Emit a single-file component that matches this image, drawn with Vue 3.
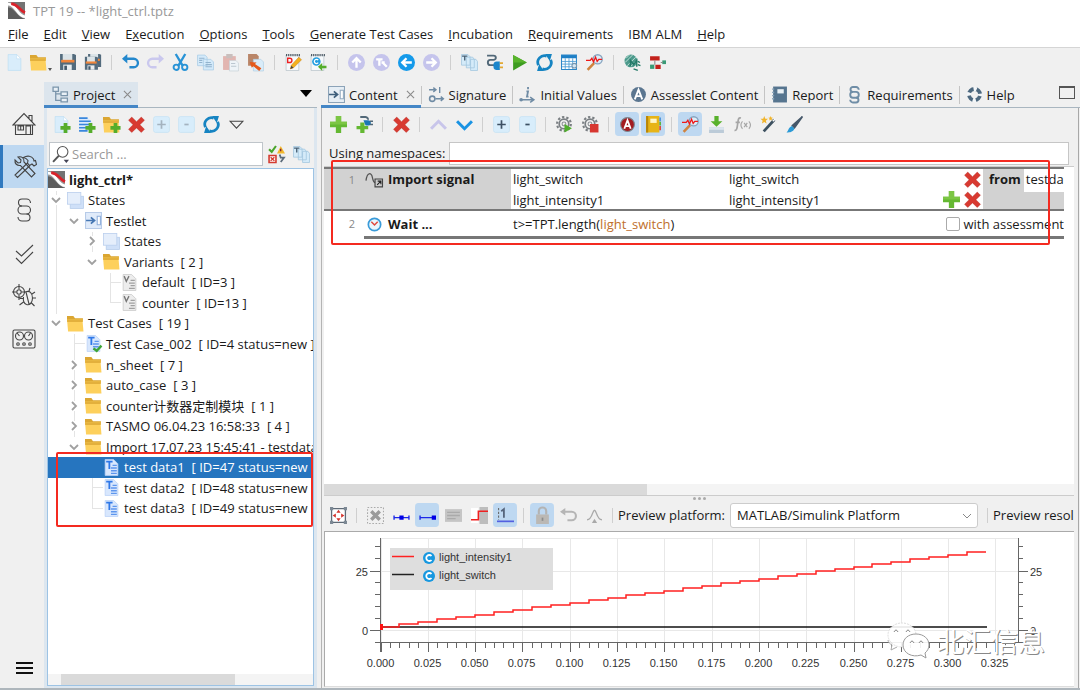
<script setup>
import { ref } from 'vue'

const page = '<path d="M2 .5h8l4 4v11H2z" fill="#d9edfb" stroke="#b9dcf3" stroke-width=".6"/><path d="M10 .5l4 4h-4z" fill="#fff" stroke="#b9dcf3" stroke-width=".5"/>'
const folder = '<path d="M0 1h6l1.500 2H15v3H0z" fill="#dba632"/><path d="M0 4h14.500l1 11.500H1z" fill="#fdd05c"/><path d="M0 4h14.500l.3 2.500H.2z" fill="#e3b03c"/>'
const plus = '<path d="M10 6.500h3.500v3h3v3.500h-3v3H10v-3H7V9.500h3z" fill="#55ad2b"/>'
const disk = '<path d="M1 0h13l2 1v14H1z" fill="#536b7d"/><path d="M3.500 0h9v7h-9z" fill="#dce4e8"/><path d="M2 5.500h12.500v2.500H2z" fill="#f0853a"/><path d="M4 10h8v5H4z" fill="#e9eef1"/><path d="M5 11h2.500v4H5z" fill="#43586a"/>'
const copy = '<path d="M.5 1h7l2 2v8h-9zM6 5h7l2.500 2.500V15H6z" fill="#d4eafa" stroke="#a9cce6" stroke-width=".7"/><path d="M2 4h5M2 6h3M2 8h3M8 8h5M8 10h6M8 12h6" stroke="#93b4cf" fill="none"/>'
const cross = '<path d="M3.500 1L8 5.300 12.500 1 15.500 4 11.200 8.200l4.300 4.300-3 3L8 11.200l-4.500 4.300-3-3 4.300-4.300L.5 4z" fill="#d83a31" stroke="#b82d28" stroke-width=".4"/>'
const refresh = '<path d="M2.200 10.500A6.300 6.300 0 0 1 10 2M13.800 5.500A6.300 6.300 0 0 1 6 14" fill="none" stroke="#1684c2" stroke-width="2.600"/><path d="M8.500 0H15l-2 6.500zM7.500 16H1l2-6.500z" fill="#1684c2"/>'
const gear = '<circle cx="7.500" cy="7.500" r="4.500" fill="none" stroke="#7a7f83" stroke-width="1.600"/><circle cx="7.500" cy="7.500" r="6.500" fill="none" stroke="#7a7f83" stroke-width="2" stroke-dasharray="2.200 1.880"/><circle cx="7.500" cy="7.500" r="1.800" fill="none" stroke="#8b9094"/>'
const magnify = '<circle cx="11" cy="5" r="4.300" fill="#dcecf8" stroke="#87a4bf" stroke-width="1.300"/><path d="M7.600 8.500L1.500 15" stroke="#cf8440" stroke-width="2.400"/><path d="M0 6h4l1.500-2 1.500 3.500L9 3l1.500 4L12 5h3" stroke="#f01818" fill="none" stroke-width="1.200"/>'
const sheetT = '<path d="M2 .5h8l4 4v11H2z" fill="#d8e7fd" stroke="#b8d0f5" stroke-width=".7"/><path d="M3 2.500h6M6 2.500v7" stroke="#2f78e8" stroke-width="1.700"/><path d="M9 6h4M7.500 8.500H13M7.500 11H13M7.500 13.500H13" stroke="#5d96ee" stroke-width="1.300"/>'
const logo = '<path d="M0 0h16v16H0z" fill="#9a9a9a"/><path d="M0 5c6 0 8 9 16 11H0z" fill="#5c5c5c"/><path d="M3 0h13v10C11 8 9 1 3 0z" fill="#747474"/><path d="M0 2c8 0 8 11 16 12" stroke="#fff" stroke-width="2.600" fill="none"/><path d="M3 1.500c7 .5 7 6 13 8.500" stroke="#d9222a" stroke-width="2.600" fill="none"/>'
const pages = '<path d="M.5.5h6l2 2v8h-8zM5 3h6l1.500 2v8H5zM9 5h5l1.500 2v8.500H9z" fill="#d5ebf9" stroke="#9fc4dd" stroke-width=".7"/><path d="M1 2h5M3.500 2v4" stroke="#4b6377" stroke-width="1.300"/>'
const box = '<rect x=".5" y=".5" width="15" height="15" rx="2" fill="#d8edfb" stroke="#c2dff2" stroke-width=".6"/>'
const round = (c, p) => `<circle cx="8" cy="8" r="8" fill="${c}"/><path d="${p}" stroke="#fff" stroke-width="2.200" fill="none"/>`

const icons = {
  logo, page, folder, disk, copy, cross, refresh, magnify, sheetT, pages,
  folderOpen: folder,
  disks: `<g transform="translate(3 0) scale(.82)">${disk}</g><g transform="translate(0 2.500) scale(.82)">${disk}</g>`,
  undo: '<path d="M3 4.500h8a4 4 0 0 1 0 8H7" stroke="#2488cd" stroke-width="2.200" fill="none"/><path d="M5 0v9L0 4.500z" fill="#2488cd"/>',
  redo: '<path d="M13 4.500H5a4 4 0 0 0 0 8h4" stroke="#cac8ee" stroke-width="2.200" fill="none"/><path d="M11 0v9l5-4.500z" fill="#cac8ee"/>',
  cut: '<path d="M3.500 0l6.500 11M12.500 0L6 11" stroke="#2993d6" stroke-width="2.200"/><circle cx="4" cy="12.500" r="2.500" fill="none" stroke="#2993d6" stroke-width="1.800"/><circle cx="12" cy="12.500" r="2.500" fill="none" stroke="#2993d6" stroke-width="1.800"/>',
  paste: '<path d="M1 2h12v13H1z" fill="#e2b5b0"/><path d="M4 0h6v4H4z" fill="#c9bebc"/><path d="M7 6h6l2.500 2.500V16H7z" fill="#eef3f7" stroke="#c5ced5" stroke-width=".6"/><path d="M8.500 9h4M8.500 11.500h5" stroke="#bcc7d0"/>',
  pasteRef: '<path d="M1 0h8l2 2v9H1z" fill="#b98568"/><path d="M6 5h7l2.500 2.500V16H6z" fill="#d9ecf9" stroke="#afcde2" stroke-width=".6"/><path d="M2.500 7.500L9 8 7.500 9.500l6 4-2 2.500-5.500-4.500L4.500 13z" fill="#e55a1c"/>',
  noteD: '<path d="M1 1h12v14.500H1z" fill="#f6f9fb" stroke="#b7c2ca" stroke-width=".7"/><path d="M1 1h13" stroke="#45525d" stroke-width="2" stroke-dasharray="1 1"/><path d="M2.500 4h2a2 2 0 0 1 0 4h-2z" fill="none" stroke="#e22" stroke-width="1.300"/><path d="M5 14l1-3.500L13 3l2.500 2.500L8 13z" fill="#f4b11d" stroke="#c57d13" stroke-width=".5"/><path d="M5 14l1-3 2 2z" fill="#444"/>',
  noteC: '<path d="M1 1h12v14.500H1z" fill="#f6f9fb" stroke="#b7c2ca" stroke-width=".7"/><path d="M1 1h13" stroke="#45525d" stroke-width="2" stroke-dasharray="1 1"/><circle cx="6" cy="7" r="4" fill="#239ee0"/><path d="M7.700 5.800a2 2 0 1 0 0 2.400" fill="none" stroke="#fff" stroke-width="1.200"/><path d="M7.500 12l4-3.500v2.500h4v2.500h-4V16z" fill="#55ad2b"/>',
  up: round('#c5c4ec', 'M8 13V4M4 8l4-4 4 4'),
  tl: round('#c5c4ec', 'M3 5h6M6 5v6M8 8h3M13 12L9 8'),
  back: round('#159aea', 'M13 8H4M8 4L4 8l4 4'),
  forward: round('#c5c4ec', 'M3 8h9M8 4l4 4-4 4'),
  plug: '<path d="M1 1.500h6c3 0 3 4 0 4H4c-3 0-3 5 0 5h4" fill="none" stroke="#526878" stroke-width="1.800"/><path d="M7 10c0-2 1.500-3 3-3h3v8h-3c-1.500 0-3-1-3-3z" fill="#1b86cc"/><path d="M13 8.500h3M13 12.500h3" stroke="#e2a832" stroke-width="1.600"/>',
  play: '<path d="M2 1l13 7-13 7.500z" fill="#3d9b20"/><path d="M2 1l13 7H2z" fill="#58b42c"/>',
  table: '<path d="M.5 1h14v13.500H.5z" fill="#fff" stroke="#2b86c8"/><path d="M.5 1h14v3H.5z" fill="#1d7fc6"/><path d="M4 4v10M7.500 4v10M11 4v10M1 7h13M1 9.500h13M1 12h13" stroke="#4a9bd3" stroke-width=".8"/><circle cx="12.500" cy="11" r="2.200" fill="#d5e8f5" stroke="#7896ae"/>',
  sphere: '<circle cx="6.500" cy="6.500" r="6" fill="#4c9a8c"/><path d="M2 4l3-3M1 8l7-7M3 11l8-8M5 13l7-7" stroke="#c4e2da" stroke-width=".9"/><path d="M6 12V6l3 4 3-4v6M13 7l2 1M13 10l2.500 1M9 14l4 1.500" stroke="#247a68" stroke-width="1.300" fill="none"/>',
  blocks: '<path d="M1 2h9v4H1zM6 10h5v4H6z" fill="#c3221c"/><path d="M1 10h4v4H1z" fill="#3a9a76"/><path d="M12.500 6H16v3.500h-3.500z" fill="#3a9a76"/><path d="M5.500 6v4M11 8h2" stroke="#888"/>',
  pagePlus: page + plus,
  linesPlus: '<path d="M1 1.500h8l4 4V14H1z" fill="#d9e9fd"/><path d="M1 2h8M1 5h11M1 8h11M1 11h8M1 14h8" stroke="#3a87dc" stroke-width="1.500"/>' + plus,
  folderPlus: folder + plus,
  expand: box + '<path d="M8 4v8M4 8h8" stroke="#3d5063" stroke-width="1.600"/>',
  collapse: box + '<path d="M6 8h4" stroke="#3d5063" stroke-width="1.600"/>',
  expandOff: box + '<path d="M8 4v8M4 8h8" stroke="#a4b3bf" stroke-width="1.600"/>',
  collapseOff: box + '<path d="M6 8h4" stroke="#a4b3bf" stroke-width="1.600"/>',
  triOutline: '<path d="M2 5h12l-6 6.500z" fill="none" stroke="#444"/>',
  search: '<circle cx="10" cy="5.500" r="5" fill="#fff" stroke="#555" stroke-width="1"/><path d="M6.500 9L1 15" stroke="#555" stroke-width="1.800"/><path d="M11 13h5l-2.500 3z" fill="#445"/>',
  filter: '<path d="M1 3l2.500 2.500L7.500 0" stroke="#4aa52b" stroke-width="2" fill="none"/><path d="M12 0l4 7H8.500z" fill="#f2b72b"/><path d="M12 2.500v2.500" stroke="#603" /><path d="M1 9h6.500v6.500H1z" fill="#fff" stroke="#d43b30" stroke-width="1.500"/><path d="M2.500 10.500l3.500 3.500M6 10.500L2.500 14" stroke="#d43b30" stroke-width="1.300"/><path d="M11 8l1 3h3l-3 4" stroke="#5c6b7a" stroke-width="1.700" fill="none"/>',
  states: '<rect x="3" y="4" width="12.500" height="11.500" fill="#cfe0f8" stroke="#b5cbea" stroke-width=".7"/><rect x=".5" y=".5" width="12.500" height="11" fill="#e5eefb" stroke="#bcd0ee" stroke-width=".8"/>',
  testlet: '<path d="M.5.500h15v15H.5z" fill="#e0ebfa" stroke="#b7cbe8"/><path d="M1 8h7M5.500 5L9 8l-3.500 3" stroke="#4677b3" stroke-width="1.600" fill="none"/><path d="M11.500 4h3v8h-3z" fill="#fff" stroke="#8eaedb"/>',
  content: '<path d="M.5.500h15v15H.5z" fill="#e6eef5" stroke="#8ca3b8"/><path d="M1 8h7M5.500 5L9 8l-3.500 3" stroke="#3e5f7c" stroke-width="1.600" fill="none"/><path d="M11.500 4h3v8h-3z" fill="#fff" stroke="#92aac0"/>',
  variant: '<path d="M2 .5h8l4 4v11H2z" fill="#ededed" stroke="#c6c6c6" stroke-width=".7"/><path d="M3 2l2 5 2.500-5" stroke="#777" stroke-width="1.300" fill="none"/><path d="M9 6h4M7.500 8.500H13M9 11h4M7.500 13.500H13" stroke="#a0a0a0" stroke-width="1.200"/>',
  sheetOk: sheetT + '<path d="M8 12.500l3 2.500 4.500-5" stroke="#3da535" stroke-width="2.200" fill="none"/>',
  project: '<path d="M1 1h5v4H1zM8.500 5.500h6v3.500h-6zM8.500 11.500h6V15h-6z" fill="#e9f0f6" stroke="#7b95ab" stroke-width="1.200"/><path d="M3.500 5v8.500h5M3.500 7.500h5" stroke="#7b95ab" fill="none" stroke-width="1.200"/>',
  signature: '<path d="M1 3.500h6M5 1.500l2.500 2L5 5.500M11 1v5.500M7 12h7M12 10l2.500 2-2.500 2" fill="none" stroke="#6f8ba4" stroke-width="1.300"/><circle cx="4" cy="12" r="2.500" fill="none" stroke="#6f8ba4" stroke-width="1.500"/>',
  initial: '<path d="M8.500 1v2M7 5h1.500l-1 5H9" stroke="#6f8ba4" stroke-width="1.700" fill="none"/><path d="M1 13h12M10.500 10.500L14 13l-3.500 2.500" fill="none" stroke="#6f8ba4" stroke-width="1.400"/><circle cx="2" cy="13" r="1.700" fill="#6f8ba4"/>',
  assess: '<circle cx="8" cy="8" r="7" fill="#5b7690"/><path d="M4.500 12.500L8 3.500l3.500 9M6 9.500h4" stroke="#fff" stroke-width="1.800" fill="none"/>',
  report: '<path d="M2 .5h13v15H2z" fill="#56758f"/><path d="M6 3h6v4H6z" fill="#e9f0f5"/><path d="M1 3h2M1 6h2M1 9h2M1 12h2" stroke="#88a3b8" stroke-width="1.200"/>',
  para: '<rect x="4" y="5.500" width="8" height="5.500" rx="2.500" fill="none" stroke="#6f8da6" stroke-width="1.800"/><path d="M12 3.500A2.500 2.500 0 0 0 9.500 1h-3a2.250 2.250 0 0 0 0 4.500M4 13a2.500 2.500 0 0 0 2.500 2.500h3a2.250 2.250 0 0 0 0-4.500" fill="none" stroke="#6f8da6" stroke-width="1.800"/>',
  help: '<circle cx="8" cy="8" r="5.200" fill="none" stroke="#4c687f" stroke-width="3.600"/><circle cx="8" cy="8" r="5.200" fill="none" stroke="#f3f6f8" stroke-width="4" stroke-dasharray="3 5.168" stroke-dashoffset="1.500"/>',
  add: '<path d="M5.500 0h5v5.500H16v5h-5.500V16h-5v-5.500H0v-5h5.500z" fill="#64b832"/><path d="M5.500 0h5v5.500H16V8H0V5.500h5.500z" fill="#7cc644"/>',
  addPlug: '<path d="M4 6h4v3.500h3.500v3H8V16H4v-3.500H.5v-3H4z" fill="#64b832"/><path d="M4 1h5c2 0 2 2 3 2" fill="none" stroke="#526878" stroke-width="1.800"/><path d="M7 4h4c2 0 3 1 3 2.500S13 9 11 9H9z" fill="#1b76b4"/><path d="M13 5h3M13 8h3" stroke="#526878" stroke-width="1.400"/>',
  chevUp: '<path d="M1 12l7-7 7 7" fill="none" stroke="#c8c5ea" stroke-width="2.800"/>',
  chevDown: '<path d="M1 5l7 7 7-7" fill="none" stroke="#1a93e3" stroke-width="2.800"/>',
  gearPlay: gear + '<path d="M8 7.500l7 4L8 15.500z" fill="#4fae2b"/>',
  gearStop: gear + '<path d="M7.500 7.500h8v8h-8z" fill="#d73730"/>',
  redA: '<circle cx="8" cy="8" r="6.500" fill="#a31b20" stroke="#7d8790"/><path d="M5 12l3-8 3 8M6 9.500h4" stroke="#fff" stroke-width="1.700" fill="none"/>',
  book: '<path d="M1 0h12.500v15.500H1z" fill="#e7b417"/><path d="M1 0h2v15.500H1z" fill="#b98607"/><path d="M5 2.500h6v4H5z" fill="#fff6c8"/><path d="M13.500 1.500h1.500V5h-1.500z" fill="#4a90d9"/><path d="M13.500 5.500h1.500V9h-1.500z" fill="#5ab033"/><path d="M13.500 9.500h1.500v4h-1.500z" fill="#df4034"/>',
  import: '<path d="M6 0h4v5h3.500L8 10 2.500 5H6z" fill="#58b12c"/><path d="M1 10.500h14V16H1z" fill="#bccbd8"/><path d="M1 10.500h14V13H1z" fill="#dbe5ed"/>',
  fx: '<path d="M6.500 2C4 1 4 4 3.500 7S3 14 .5 13.500M1.500 6h4" stroke="#a6a6a6" stroke-width="1.600" fill="none"/><path d="M8 5c-2 2-2 5 0 7M14 5c2 2 2 5 0 7M9.500 6.500l3 4M12.500 6.500l-3 4" stroke="#a6a6a6" stroke-width="1.100" fill="none"/>',
  wand: '<path d="M3.500 14.500l10-11" stroke="#3d5160" stroke-width="2.600"/><path d="M12 5l2-2" stroke="#fff" stroke-width="1.400"/><path d="M4 0l1 2.500 2.500.2L5.500 4.500l.7 2.500L4 5.700 1.800 7l.7-2.500L.5 2.700 3 2.500zM10 0l.6 1.500 1.600.2-1.200 1 .3 1.600L10 3.500 8.700 4.300 9 2.700l-1.200-1 1.600-.2z" fill="#f1b42b"/>',
  brush: '<path d="M15.500.5L6 9l2 2z" fill="#46586a" stroke="#46586a" stroke-width="1.500"/><path d="M5.500 9.500L8 12c-1.500 3-4 3.500-7.500 3.500C2.500 14 2 11 5.500 9.500z" fill="#2c9ad6"/>',
  fit: '<path d="M1.500 1.500h13v13h-13z" fill="#fff" stroke="#5f6b78" stroke-width="1.200"/><path d="M0 0h3v3H0zM13 0h3v3h-3zM0 13h3v3H0zM13 13h3v3h-3z" fill="#7c8894"/><path d="M8 2.500L10 5.500H6zM8 13.500L6 10.500h4zM2.500 8l3-2v4zM13.500 8l-3-2v4z" fill="#d4322b"/>',
  clearOff: '<path d="M.5.500h15v15H.5z" fill="none" stroke="#aaa" stroke-dasharray="1.500 1.500"/><path d="M4 4l8 8M12 4l-8 8" stroke="#9b9b9b" stroke-width="3.200"/>',
  mid: '<path d="M1 10h14M1 8v4M15 8v4" stroke="#1c28e8" stroke-width="1.300"/><path d="M6 8h4v4H6z" fill="#0000e6"/>',
  ends: '<path d="M1 10h14M1 8v4" stroke="#1c28e8" stroke-width="1.300"/><path d="M12 8h4v4h-4z" fill="#0000e6"/>',
  legendOff: '<path d="M0 2h16v12H0z" fill="#c5c5c5"/><path d="M2 5h12M2 8h12M2 11h8" stroke="#aaa" stroke-width="1.200"/>',
  step: '<path d="M8 0h8v16H8z" fill="#bdbdbd"/><path d="M0 1h7v14H0z" fill="#fff"/><path d="M0 12h7V4h9" fill="none" stroke="#ef2020" stroke-width="1.600"/>',
  axisOne: '<path d="M1.500 1v11" stroke="#666" stroke-dasharray="2 1.500"/><path d="M4 4l2.500-2v8" fill="none" stroke="#56657c" stroke-width="1.700"/><path d="M0 13.500h16" stroke="#5360e0" stroke-width="1.600"/>',
  lock: '<path d="M2 7h12v9H2z" fill="#bbb8b4"/><path d="M4.500 7V4a3.500 3.500 0 0 1 7 0v3" fill="none" stroke="#b3b3b3" stroke-width="2"/><path d="M8 10v3" stroke="#8c8c8c" stroke-width="1.600"/>',
  undoOff: '<path d="M3 4.500h8a4 4 0 0 1 0 8H7" stroke="#b5b5b5" stroke-width="2" fill="none"/><path d="M5 1v7L0 4.500z" fill="#b5b5b5"/>',
  peak: '<path d="M1 12c5 0 5-9 7-9s2 9 7 9" fill="none" stroke="#a9a9a9" stroke-width="1.300"/><path d="M8 11l2.500 4h-5z" fill="#a9a9a9"/>',
  signalIn: '<path d="M0 9C1 1 5 1 6 6c.7 4 1.500 5 3 5" fill="none" stroke="#555" stroke-width="1.200"/><path d="M8.500 7.500h7v7.500h-7z" fill="#ccc" stroke="#444" stroke-width="1.100"/><path d="M10.500 13l3.500-3.500M11 9.500h3v3" stroke="#222" fill="none"/>',
  clock: '<circle cx="8" cy="8" r="5.800" fill="#eaf6fd" stroke="#3a9bd9" stroke-width="1.600"/><path d="M5 5.500l3 3 3-3" stroke="#e0483e" stroke-width="1.400" fill="none"/>',
}

const side = [
  ['Home', '<path d="M1 13L12 1.500 23 13zM3.500 13v9.500h17V13M17 6.500V3.500h3V9.500M14 22v-8h4.500v8M6 14h5.500v4H6zM8.700 14v4"/>'],
  ['Tools', '<path d="M2 5l3 3 2.500-.5L8 5 5 2c3.500-1 6.500 1 6 5l11 11.500-3.500 3.500L7.500 10.500C4 11 1.500 8.500 2 5z"/><path d="M14.500 8L2 20l2.500 2.500L17 10.500M10.500 2.500c4-2.500 8-1.500 10 1.500l.5 2 1.500-.5 1 4-2.500 1.500-2-2-2.500 1.500-2-2.500.5-2.500c-1-1.500-2.500-2.500-4.500-3z"/>'],
  ['Requirements', '<rect x="6" y="8" width="12.500" height="8" rx="4"/><path d="M18.500 5a4 4 0 0 0-4-4h-4.500a3.500 3.500 0 0 0 0 7M6 19a4 4 0 0 0 4 4h4.500a3.500 3.500 0 0 0 0-7"/>'],
  ['Checks', '<path d="M4 10l5.500 5L21 4M4 17l5.500 5.500L21 11"/>'],
  ['Debug', '<circle cx="7" cy="8" r="5.500"/><circle cx="7" cy="8" r="2.200"/><path d="M7 0v5M7 11v5M0 8h4.500M9.500 8H14"/><path d="M13.500 8c4-2 7 1 7 6s-3 7.500-6 6.500c-2.500-1-3.500-4-3-7.500M14 8l3 12M17 7l1-3M20 10l3-2M21 14h3M19.500 19l3 3M11.500 18l-4 3M11 14.500H7.500"/>'],
  ['Dashboard', '<rect x="1" y="3" width="22" height="18" rx="1.500"/><circle cx="7.500" cy="9" r="4"/><circle cx="16.500" cy="9" r="4"/><path d="M7.500 9L5 6M16.500 9l2-3"/><circle cx="6" cy="17" r="1.300"/><circle cx="12" cy="17" r="1.300"/><circle cx="18" cy="17" r="1.300"/>'],
]

const menus = [['', 'F', 'ile'], ['', 'E', 'dit'], ['', 'V', 'iew'], ['E', 'x', 'ecution'], ['', 'O', 'ptions'], ['', 'T', 'ools'], ['', 'G', 'enerate Test Cases'], ['', 'I', 'ncubation'], ['', 'R', 'equirements'], ['IBM ALM', '', ''], ['', 'H', 'elp']]

const mainBar = ['page', 'folderOpen', 'disk', 'disks', '|', 'undo', 'redo', 'cut', 'copy', 'paste', 'pasteRef', '|', 'noteD', 'noteC', '|', 'up', 'tl', 'back', 'forward', '|', 'pages', 'plug', 'play', 'refresh', 'table', 'magnify', '|', 'sphere', 'blocks']
const treeBar = ['pagePlus', 'linesPlus', 'folderPlus', 'cross', 'expandOff', 'collapseOff', 'refresh', 'triOutline']
const editBar = ['add', 'addPlug', '|', 'cross', '|', 'chevUp', 'chevDown', '|', 'expand', 'collapse', '|', 'gearPlay', 'gearStop', '|', 'redA*', 'book*', '|', 'magnify*', 'import', 'fx', 'wand', 'brush']
const plotBar = ['fit', '|', 'clearOff', 'mid', 'ends*', 'legendOff', 'step', 'axisOne*', '|', 'lock*', 'undoOff', 'peak', '|']
const ico = (n) => icons[n.replace('*', '')]

const tabs = [['content', 'Content'], ['signature', 'Signature'], ['initial', 'Initial Values'], ['assess', 'Assesslet Content'], ['report', 'Report'], ['para', 'Requirements'], ['help', 'Help']]

// l: level, i: icon, t: label, n: tag, a: arrow, g: vertical guides as [level, ends here]
const rows = [
  { l: 0, i: 'logo', t: 'light_ctrl*', g: [] },
  { l: 1, i: 'states', t: 'States', a: 'd', g: [[1, 0]] },
  { l: 2, i: 'testlet', t: 'Testlet', a: 'd', g: [[1, 0]] },
  { l: 3, i: 'states', t: 'States', a: 'r', g: [[1, 0], [3, 0]] },
  { l: 3, i: 'folder', t: 'Variants', n: '[ 2 ]', a: 'd', g: [[1, 0]] },
  { l: 4, i: 'variant', t: 'default', n: '[ ID=3 ]', g: [[1, 0], [4, 0]] },
  { l: 4, i: 'variant', t: 'counter', n: '[ ID=13 ]', g: [[1, 0], [4, 1]] },
  { l: 1, i: 'folder', t: 'Test Cases', n: '[ 19 ]', a: 'd', g: [] },
  { l: 2, i: 'sheetOk', t: 'Test Case_002', n: '[ ID=4 status=new ]', g: [[2, 0]] },
  { l: 2, i: 'folder', t: 'n_sheet', n: '[ 7 ]', a: 'r', g: [[2, 0]] },
  { l: 2, i: 'folder', t: 'auto_case', n: '[ 3 ]', a: 'r', g: [[2, 0]] },
  { l: 2, i: 'folder', t: 'counter计数器定制模块', n: '[ 1 ]', a: 'r', g: [[2, 0]] },
  { l: 2, i: 'folder', t: 'TASMO 06.04.23 16:58:33', n: '[ 4 ]', a: 'r', g: [[2, 0]] },
  { l: 2, i: 'folder', t: 'Import 17.07.23 15:45:41 - testdata', a: 'd', g: [] },
  { l: 3, i: 'sheetT', t: 'test data1', n: '[ ID=47 status=new', g: [], sel: true },
  { l: 3, i: 'sheetT', t: 'test data2', n: '[ ID=48 status=new', g: [[3, 0]] },
  { l: 3, i: 'sheetT', t: 'test data3', n: '[ ID=49 status=new', g: [[3, 1]] },
]

const platform = ref('MATLAB/Simulink Platform')
const search = ref('')
const namespaces = ref('')
const assessment = ref(false)

const X0 = 54.5
const xt = Array.from({ length: 68 }, (_, i) => ({ x: Math.round(X0 + i * 9.46) + 0.5, major: i % 5 === 0, label: (i * 0.005).toFixed(3) }))
const yt = [14, 26, 39, 50, 62, 74, 86, 98, 110].map((y) => ({ y: y + 0.5, label: y === 39 ? '25' : y === 98 ? '0' : '' }))
let signal = 'M54 95'
for (let n = 0; n < 32; n++) {
  signal += `V${Math.round(94.5 - 2.4 * n)}H${Math.round(X0 + 18.92 * (n + 1))}`
}
</script>

<template>
  <div class="app">
    <header class="title"><svg class="ico" viewBox="0 0 16 16" v-html="icons.logo" /><span>TPT 19 -- *light_ctrl.tptz</span></header>
    <nav class="menu">
      <button v-for="m in menus" :key="m.join('')">{{ m[0] }}<u>{{ m[1] }}</u>{{ m[2] }}</button>
    </nav>
    <div class="bar main-bar">
      <template v-for="(n, k) in mainBar" :key="k">
        <i v-if="n === '|'" class="sep" />
        <button v-else class="tool" :class="{ drop: n === 'folderOpen' }" :aria-label="n"><svg class="ico" viewBox="0 0 16 16" v-html="ico(n)" /></button>
      </template>
    </div>

    <div class="work">
      <aside class="side">
        <button v-for="(s, k) in side" :key="s[0]" class="side-btn" :class="{ on: k === 1 }" :aria-label="s[0]"><svg viewBox="0 0 24 24" v-html="s[1]" /></button>
        <button class="burger" aria-label="Menu"><i /><i /><i /></button>
      </aside>

      <section class="project">
        <div class="tabs">
          <button class="tab active"><svg class="ico" viewBox="0 0 16 16" v-html="icons.project" /><span>Project</span><svg class="close" viewBox="0 0 10 10"><path d="M1 1l8 8M9 1L1 9" /></svg></button>
          <button class="caret" aria-label="Views" />
        </div>
        <div class="project-body">
          <div class="bar tree-bar">
            <button v-for="n in treeBar" :key="n" class="tool" :aria-label="n"><svg class="ico" viewBox="0 0 16 16" v-html="ico(n)" /></button>
          </div>
          <div class="search-row">
            <label class="search"><svg class="ico" viewBox="0 0 16 16" v-html="icons.search" /><input v-model="search" type="text" placeholder="Search ..." aria-label="Search"></label>
            <button class="tool" aria-label="Filter"><svg class="ico" viewBox="0 0 16 16" v-html="icons.filter" /></button>
            <button class="tool" aria-label="Variants"><svg class="ico" viewBox="0 0 16 16" v-html="icons.pages" /></button>
          </div>
          <div class="tree">
            <ul>
              <li v-for="r in rows" :key="r.t + r.l + r.a" :class="{ root: r.l === 0, sel: r.sel }" :style="{ paddingLeft: r.l ? (r.l - 1) * 18 + 1 + 'px' : '0px' }">
                <i v-for="g in r.g" :key="g[0]" class="guide" :class="{ half: g[1] }" :style="{ left: (g[0] - 1) * 18 + 8 + 'px' }" />
                <span v-if="r.l" class="arrow"><svg v-if="r.a" :class="r.a" viewBox="0 0 10 10"><path d="M3 1l4 4-4 4" /></svg><i v-else-if="!r.sel" class="dash" /></span>
                <svg class="ico" viewBox="0 0 16 16" v-html="icons[r.i]" />
                <span class="label">{{ r.t }}</span><span v-if="r.n" class="tag">{{ r.n }}</span>
              </li>
            </ul>
            <div class="scroll"><i /></div>
            <div class="mark mark-tree" />
          </div>
        </div>
      </section>

      <main class="editor">
        <div class="tabs">
          <button v-for="(t, k) in tabs" :key="t[1]" class="tab" :class="{ active: k === 0 }"><svg class="ico" viewBox="0 0 16 16" v-html="icons[t[0]]" /><span>{{ t[1] }}</span><svg v-if="k === 0" class="close" viewBox="0 0 10 10"><path d="M1 1l8 8M9 1L1 9" /></svg></button>
          <button class="maximize" aria-label="Maximize" />
        </div>
        <div class="editor-body">
          <div class="bar edit-bar">
            <template v-for="(n, k) in editBar" :key="k">
              <i v-if="n === '|'" class="sep" />
              <button v-else class="tool" :class="{ pressed: n.endsWith('*') }" :aria-label="n"><svg class="ico" viewBox="0 0 16 16" v-html="ico(n)" /></button>
            </template>
          </div>
          <div class="script">
            <div class="ns"><label for="ns">Using namespaces:</label><input id="ns" v-model="namespaces" type="text"></div>
            <div class="sheet">
              <div class="steps">
                <div class="step first">
                  <div class="name"><span class="num">1</span><svg class="ico" viewBox="0 0 16 16" v-html="icons.signalIn" /><b>Import signal</b></div>
                  <div class="col"><span>light_switch</span><span>light_intensity1</span></div>
                  <div class="col"><span>light_switch</span><span>light_intensity1</span></div>
                  <div class="acts">
                    <button class="act" aria-label="Remove light_switch"><svg class="ico" viewBox="0 0 16 16" v-html="icons.cross" /></button>
                    <button class="act" aria-label="Add"><svg class="ico" viewBox="0 0 16 16" v-html="icons.add" /></button>
                    <button class="act" aria-label="Remove light_intensity1"><svg class="ico" viewBox="0 0 16 16" v-html="icons.cross" /></button>
                  </div>
                  <div class="from"><b>from</b><span>testda</span></div>
                </div>
                <div class="step second">
                  <div class="name"><span class="num">2</span><svg class="ico" viewBox="0 0 16 16" v-html="icons.clock" /><b>Wait ...</b></div>
                  <div class="expr">t&gt;=TPT.length(<em>light_switch</em>)</div>
                  <label class="assess"><input v-model="assessment" type="checkbox">with assessment</label>
                </div>
              </div>
              <div class="scroll"><i /></div>
            </div>
            <div class="mark mark-script" />
          </div>
          <div class="splitter"><i /><i /><i /></div>
          <div class="bar plot-bar">
            <template v-for="(n, k) in plotBar" :key="k">
              <i v-if="n === '|'" class="sep" />
              <button v-else class="tool" :class="{ pressed: n.endsWith('*') }" :aria-label="n"><svg class="ico" viewBox="0 0 16 16" v-html="ico(n)" /></button>
            </template>
            <label for="platform">Preview platform:</label>
            <div class="select"><select id="platform" v-model="platform"><option>MATLAB/Simulink Platform</option></select><svg viewBox="0 0 10 10"><path d="M1 3l4 4 4-4" /></svg></div>
            <i class="sep" />
            <span class="res">Preview resolution:</span>
          </div>
          <div class="chart">
            <svg class="plot" viewBox="-1 0 720 154" preserveAspectRatio="xMinYMin meet">
              <g class="grid">
                <path v-for="t in xt.filter(v => v.major)" :key="t.x" :d="`M${t.x} 6V110`" />
                <path d="M54 6.500H692M54 39.500H692M54 98.500H692" />
              </g>
              <rect x="64" y="16" width="163" height="42" fill="#dedede" />
              <g class="axis">
                <path d="M54.500 6V120M692.500 6V111M49 110.500H698" />
                <path v-for="t in xt" :key="t.x" :d="`M${t.x} 111v${t.major ? 9 : 5}`" />
                <path v-for="t in yt" :key="t.y" :d="`M54 ${t.y}h-${t.label ? 10 : 5}M692 ${t.y}h${t.label ? 10 : 5}`" />
              </g>
              <g class="nums">
                <text v-for="t in xt.filter(v => v.major)" :key="t.x" :x="t.x - 1" y="135" text-anchor="middle">{{ t.label }}</text>
                <template v-for="t in yt.filter(v => v.label)" :key="t.y">
                  <text x="42" :y="t.y + 4" text-anchor="end">{{ t.label }}</text>
                  <text x="704" :y="t.y + 4">{{ t.label }}</text>
                </template>
                <text x="113" y="29">light_intensity1</text>
                <text x="113" y="47">light_switch</text>
              </g>
              <path d="M66 24.500h22" stroke="#f22" stroke-width="1.500" />
              <path d="M66 42.500h22" stroke="#222" stroke-width="1.500" />
              <g v-for="y in [26, 44]" :key="y">
                <circle cx="103" :cy="y" r="6" fill="#1798e0" />
                <path :d="`M105.500 ${y - 2}a3 3 0 1 0 0 4`" fill="none" stroke="#fff" stroke-width="1.800" />
              </g>
              <path d="M54 95H661" stroke="#111" stroke-width="1.500" />
              <path :d="signal" fill="none" stroke="#ff2020" stroke-width="1.500" />
              <path d="M54 92h3v6h-3z" fill="#f11" />
            </svg>
            <div class="wm">
              <svg viewBox="0 0 46 38">
                <path d="M2 18c0 2 2 4 4 5l-1 5 6-3" fill="#fff" fill-opacity=".9" stroke="#aaa" />
                <ellipse cx="16" cy="13" rx="14" ry="12" fill="#fff" fill-opacity=".9" stroke="#ddd" stroke-dasharray="2 1" />
                <path d="M30 12c8 0 13 5 13 11 0 3-1.500 6-4 8l1 5-5-3c-9 3-18-2-18-10 0-6 5-11 13-11z" fill="#fff" fill-opacity=".9" stroke="#999" />
                <path d="M8 10q2-4 4 0M20 10q2-4 4 0M24 21q2-4 4 0M33 21q2-4 4 0" fill="none" stroke="#888" />
              </svg>
              <span>北汇信息</span>
            </div>
          </div>
        </div>
      </main>
    </div>
  </div>
</template>

<style>
body { margin: 0; overflow: hidden; }
</style>

<style scoped>
* { box-sizing: border-box; }
.app { height: 100vh; display: flex; flex-direction: column; background: #f0f0f0; color: #1a1a1a; font: 13px/20px "Open Sans", "Noto Sans", "Noto Sans CJK SC", sans-serif; border-bottom: 2px solid #aeb6bc; overflow: hidden; white-space: nowrap; }
button { font: inherit; color: inherit; border: 0; background: none; padding: 0; margin: 0; }
input, select { font: inherit; color: inherit; }
.ico { width: 17px; height: 17px; flex: none; overflow: visible; }
.title { height: 22px; background: #fff; display: flex; align-items: center; gap: 8px; padding: 0 0 1px 8px; color: #999; flex: none; }
.menu { height: 26px; background: #fff; border-bottom: 1px solid #d5d5d5; display: flex; align-items: center; gap: 15px; padding: 0 0 2px 8px; flex: none; }
.bar { display: flex; align-items: center; flex: none; padding-bottom: 2px; }
.main-bar { height: 30px; padding-left: 2px; }
.tool { width: 25px; height: 24px; display: flex; align-items: center; justify-content: center; flex: none; border-radius: 4px; }
.tool.drop { width: 28px; position: relative; justify-content: flex-start; padding-left: 3px; }
.tool.drop::after { content: ""; position: absolute; right: 3px; bottom: 3px; border: 2px solid transparent; border-top: 3px solid #555; border-bottom: 0; }
.sep { width: 1px; height: 15px; margin: 0 6px; background: #cfcfcf; flex: none; }
.work { flex: 1; min-height: 0; display: flex; }
.side { width: 44px; flex: none; display: flex; flex-direction: column; padding-top: 24px; }
.side-btn { height: 43px; padding: 0 0 0 4px; display: flex; align-items: center; justify-content: center; }
.side-btn svg { width: 24px; height: 24px; fill: none; stroke: #444; stroke-width: 1.1; }
.side-btn.on { background: #bed8f1; border-left: 3px solid #3079bf; padding-left: 2px; }
.burger { margin: auto 0 14px 16px; width: 17px; display: grid; gap: 3px; }
.burger i { height: 2px; background: #111; }
.tabs { height: 26px; margin-top: 4px; display: flex; align-items: stretch; border-bottom: 1px solid #a9b6c0; flex: none; }
.tab { display: flex; align-items: center; padding: 0 6px 0 7px; gap: 4px; position: relative; }
.tab + .tab::before { content: ""; position: absolute; left: 0; top: 4px; height: 18px; width: 1px; background: #c4c4c4; }
.tab.active { border-bottom: 3px solid #4486c6; margin-bottom: -1px; padding-top: 2px; }
.tab .close { width: 9px; height: 9px; margin-left: 4px; fill: none; stroke: #8a8a8a; stroke-width: 1.2; }
.project { width: 273px; flex: none; display: flex; flex-direction: column; margin-right: 4px; }
.project .tab { background: #dce5ed; padding: 2px 6px 0 8px; }
.caret { margin: 8px 5px auto auto; border: 6px solid transparent; border-top: 7px solid #000; border-bottom: 0; }
.project-body { flex: 1; min-height: 0; display: flex; flex-direction: column; border: solid #dce6ef; border-width: 0 3px 2px; }
.tree-bar { height: 34px; padding-left: 2px; }
.search-row { display: flex; height: 24px; align-items: center; padding-left: 2px; margin-bottom: 2px; }
.search { flex: 1; height: 24px; display: flex; align-items: center; background: #fff; border: 1px solid #bfc5ca; padding-left: 2px; margin-right: 1px; }
.search input { border: 0; outline: 0; background: none; flex: 1; min-width: 0; width: 0; padding: 0 3px; }
.search input::placeholder { color: #999; opacity: 1; }
.tree { flex: 1; min-height: 0; position: relative; background: #fff; border: 1px solid #9dc3e4; display: flex; flex-direction: column; justify-content: space-between; }
.tree ul { list-style: none; margin: 0; padding: 1px 0 0; height: 350px; display: grid; grid-auto-rows: 1fr; overflow: hidden; }
.tree li { display: flex; align-items: center; position: relative; overflow: hidden; line-height: 18px; padding-bottom: 1px; }
.tree .label { margin-left: 4px; }
.tree .tag { margin-left: 7px; }
.root { font-weight: 700; }
.sel { background: #2675bf; color: #fff; }
.arrow { width: 18px; height: 100%; display: flex; align-items: center; padding-left: 2px; flex: none; z-index: 1; }
.arrow svg { width: 10px; height: 10px; fill: none; stroke: #a0a0a0; stroke-width: 1.8; background: #fff; }
.arrow .d { transform: rotate(90deg); }
.dash { width: 10px; height: 1px; margin-left: 6px; background: #e4e4e4; }
.guide { position: absolute; top: 0; bottom: 0; width: 1px; background: #e4e4e4; }
.guide.half { bottom: 50%; }
.scroll { height: 11px; background: #f4f4f4; flex: none; }
.scroll i { display: block; height: 100%; background: #dadada; }
.tree .scroll { padding: 0 78px 0 13px; }
.mark { position: absolute; border: 2px solid #f42a20; border-radius: 2px; pointer-events: none; z-index: 3; }
.mark-tree { left: 8px; top: 283px; right: 0; height: 75px; }
.editor { flex: 1; min-width: 0; display: flex; flex-direction: column; }
.editor-body { flex: 1; min-height: 0; display: flex; flex-direction: column; border-left: 1px solid #b4b4b4; border-right: 1px solid #a8a8a8; margin-right: 1px; padding: 0 4px 1px 2px; }
.maximize { width: 16px; height: 13px; border: 1px solid #555; border-top-width: 2px; margin: 4px 5px 0 auto; }
.edit-bar { height: 34px; padding-left: 1px; }
.edit-bar .tool, .plot-bar .tool { width: 26px; }
.edit-bar .sep { margin: 0 5px; }
.tool.pressed { background: #bed8f1; background-clip: padding-box; border: 0 solid transparent; border-width: 0 1px; }
.script { flex: 1; min-height: 0; display: flex; flex-direction: column; position: relative; }
.ns { display: flex; align-items: center; height: 23px; padding: 0 5px; gap: 4px; margin-bottom: 1px; }
.ns label { height: 22px; }
.ns input { flex: 1; min-width: 0; height: 23px; border: 1px solid #c6c6c6; background: #fff; }
.sheet { flex: 1; min-height: 0; display: flex; flex-direction: column; justify-content: space-between; background: #fff; border: 1px solid #ccc; border-width: 1px 0; }
.steps { margin-right: 10px; overflow: hidden; }
.step { display: flex; }
.first { border-top: 2px solid #777; border-bottom: 2px solid #777; height: 44px; line-height: 21px; }
.name { width: 187px; flex: none; display: flex; align-items: flex-start; padding-left: 22px; }
.first .name { background: #d2d2d2; }
.name .num { width: 12px; text-align: center; font-size: 11px; color: #888; margin-right: 8px; }
.name .ico { margin: 2px 5px 0 0; }
.col { width: 216px; flex: none; display: grid; grid-auto-rows: 21px; padding-left: 2px; align-content: start; }
.col + .col { flex: 1; }
.acts { display: grid; grid-template-columns: 21px 21px; grid-template-rows: 20px 20px; }
.act { display: flex; align-items: center; justify-content: center; }
.act:first-child { grid-column: 2; }
.from { width: 81px; flex: none; display: flex; align-items: flex-start; gap: 3px; background: #d2d2d2; padding-left: 6px; }
.from span { flex: 1; height: 23px; padding-left: 2px; background: #fff; overflow: hidden; }
.second { height: 28px; align-items: center; position: relative; padding-bottom: 2px; }
.second::after { content: ""; position: absolute; left: 40px; right: 0; bottom: 0; height: 3px; background: #777; }
.second .name { line-height: 20px; }
.expr { flex: 1; padding-left: 2px; }
.expr em { font-style: normal; color: #c0702c; }
.assess { display: flex; align-items: center; gap: 3px; flex: none; }
.assess input { appearance: none; width: 14px; height: 14px; border: 1px solid #aaa; border-radius: 2px; margin: 0; background: #fff; flex: none; }
.sheet .scroll { padding-right: 57%; }
.mark-script { left: 7px; right: 24px; top: 18px; height: 85px; }
.splitter { height: 5px; display: flex; gap: 2px; justify-content: center; align-items: center; }
.splitter i { width: 3px; height: 3px; border-radius: 2px; background: #aaa; }
.plot-bar { height: 30px; overflow: hidden; padding-left: 1px; }
.plot-bar .sep { margin: 0 5px; }
.select { position: relative; width: 248px; margin: 0 4px 0 5px; flex: none; }
.select select { appearance: none; width: 100%; height: 25px; background: #fff; border: 1px solid #ccc; border-radius: 3px; padding: 0 6px; }
.select svg { position: absolute; right: 6px; top: 8px; width: 10px; height: 10px; fill: none; stroke: #888; }
.chart { height: 156px; flex: none; position: relative; background: #fff; border: 1px solid #aaa; border-right: 0; border-bottom-color: #ddd; overflow: hidden; }
.plot { display: block; width: 100%; height: 100%; }
.grid { stroke: #e8e8e8; fill: none; }
.axis { stroke: #666; fill: none; }
.nums { font: 11px "Liberation Sans", Arial, sans-serif; fill: #333; }
.wm { position: absolute; right: 29px; bottom: 26px; display: flex; align-items: center; gap: 5px; color: #fff; font: 27px/36px "Noto Sans CJK SC", sans-serif; text-shadow: 1px 1px 0 #888; }
.wm svg { width: 46px; height: 38px; }
</style>
